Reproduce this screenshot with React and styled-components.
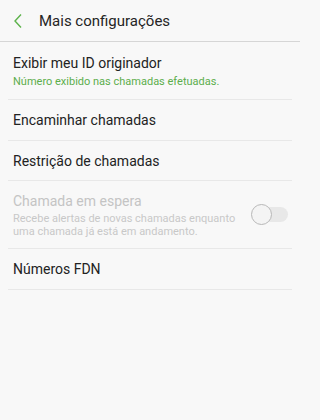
import React from 'react';
import styled, { createGlobalStyle } from 'styled-components';

const GlobalStyle = createGlobalStyle`
    html, body {
        margin: 0;
        padding: 0;
        background: #f8f8f8;
    }
    body {
        font-family: Roboto, "Liberation Sans", sans-serif;
    }
`;

const Screen = styled.div`
    width: 300px;
    height: 420px;
    background: #f8f8f8;
    overflow: hidden;
`;

const Header = styled.div`
    display: flex;
    align-items: center;
    height: 42px;
    padding-left: 13px;
    border-bottom: 1px solid #d6d6d6;
    box-sizing: border-box;
`;

const BackButton = styled.div`
    display: flex;
    align-items: center;
    width: 26px;
`;

const Title = styled.h1`
    margin: 0;
    font-size: 15px;
    font-weight: 400;
    color: #252525;
`;

const List = styled.div`
    display: flex;
    flex-direction: column;
    padding: 0 8px;
`;

const Row = styled.div`
    display: flex;
    align-items: center;
    justify-content: space-between;
    min-height: ${(p) => p.$height}px;
    padding: 0 0 0 5px;
    border-bottom: 1px solid #e8e8e8;
    box-sizing: border-box;
`;

const Texts = styled.div`
    display: flex;
    flex-direction: column;
`;

const Label = styled.div`
    font-size: 14px;
    color: ${(p) => (p.$disabled ? '#c4c4c4' : '#222')};
    line-height: 18px;
`;

const Sub = styled.div`
    font-size: 11px;
    line-height: 13px;
    margin-top: ${(p) => p.$gap || 3}px;
    color: ${(p) => (p.$disabled ? '#c8c8c8' : '#5cae4c')};
    max-width: ${(p) => p.$max || 'none'};
`;

const Toggle = styled.div`
    position: relative;
    width: 36px;
    height: 15px;
    margin-right: 4px;
    border-radius: 8px;
    background: #e8e8e8;
`;

const Knob = styled.div`
    position: absolute;
    left: -1px;
    top: -3px;
    width: 19px;
    height: 19px;
    border-radius: 50%;
    background: #f4f4f4;
    border: 1px solid #b8b8b8;
`;

const App = () => {
    return (
        <Screen>
            <GlobalStyle />
            <Header>
                <BackButton>
                    <svg width="10" height="16" viewBox="0 0 10 16">
                        <path d="M8 1.5 L2 8 L8 14.5" fill="none" stroke="#5cb24a" strokeWidth="1.4" />
                    </svg>
                </BackButton>
                <Title>Mais configurações</Title>
            </Header>
            <List>
                <Row $height={58}>
                    <Texts>
                        <Label>Exibir meu ID originador</Label>
                        <Sub>Número exibido nas chamadas efetuadas.</Sub>
                    </Texts>
                </Row>
                <Row $height={41}>
                    <Label>Encaminhar chamadas</Label>
                </Row>
                <Row $height={40}>
                    <Label>Restrição de chamadas</Label>
                </Row>
                <Row $height={68}>
                    <Texts>
                        <Label $disabled>Chamada em espera</Label>
                        <Sub $disabled $gap={2} $max="230px">
                            Recebe alertas de novas chamadas enquanto uma chamada já está em andamento.
                        </Sub>
                    </Texts>
                    <Toggle>
                        <Knob />
                    </Toggle>
                </Row>
                <Row $height={41}>
                    <Label>Números FDN</Label>
                </Row>
            </List>
        </Screen>
    );
};

export default App;
